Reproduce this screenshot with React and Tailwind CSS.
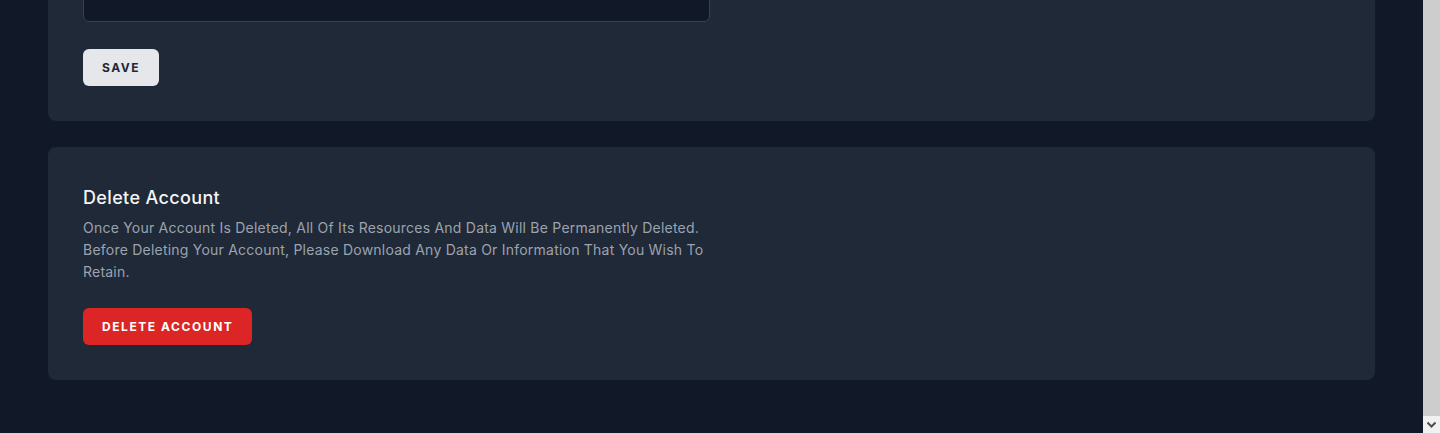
const FONT = { fontFamily: "Inter, 'Noto Sans', sans-serif" };

function SaveForm() {
  return (
    <section className="rounded-lg bg-[#1f2937] p-[35px]">
      <div className="flex max-w-[627px] flex-col gap-[27px]">
        {/* bio field, top scrolled out of view */}
        <div className="h-[121px] w-full rounded-md border border-[#374151] bg-[#111827]" />
        <div>
          <button className="h-[37px] rounded-md bg-[#e5e7eb] px-[19px] text-xs font-bold uppercase tracking-[0.13em] text-[#1f2937]">
            Save
          </button>
        </div>
      </div>
    </section>
  );
}

function DeleteAccount() {
  return (
    <section className="rounded-lg bg-[#1f2937] p-[35px]">
      <div className="max-w-[627px]">
        <h2 className="mt-[2px] text-lg font-medium leading-7 tracking-[0.02em] text-[#f3f4f6]">
          Delete Account
        </h2>
        <p className="mt-[5px] text-sm leading-[22px] tracking-[0.016em] text-[#9ca3af]">
          Once Your Account Is Deleted, All Of Its Resources And Data Will Be Permanently Deleted.
          Before Deleting Your Account, Please Download Any Data Or Information That You Wish To
          Retain.
        </p>
        <button className="mt-[25px] h-[37px] rounded-md bg-[#dc2626] px-[19px] text-xs font-bold uppercase tracking-[0.13em] text-white">
          Delete Account
        </button>
      </div>
    </section>
  );
}

function Scrollbar() {
  return (
    <div className="flex h-[433px] w-[17px] shrink-0 flex-col bg-[#f1f1f1]">
      <div className="flex-1 bg-[#cdcdcd]" />
      <div className="flex h-[17px] items-center justify-center">
        <svg width="9" height="6" viewBox="0 0 9 6">
          <path d="M0.5 0.5 L4.5 4.5 L8.5 0.5" fill="none" stroke="#505050" strokeWidth="2" />
        </svg>
      </div>
    </div>
  );
}

export default function App() {
  return (
    <div className="flex h-[433px] overflow-hidden bg-[#111827]" style={FONT}>
      <main className="flex-1 overflow-hidden">
        <div className="-mt-[134px] flex flex-col gap-[26px] px-12">
          <SaveForm />
          <DeleteAccount />
        </div>
      </main>
      <Scrollbar />
    </div>
  );
}
